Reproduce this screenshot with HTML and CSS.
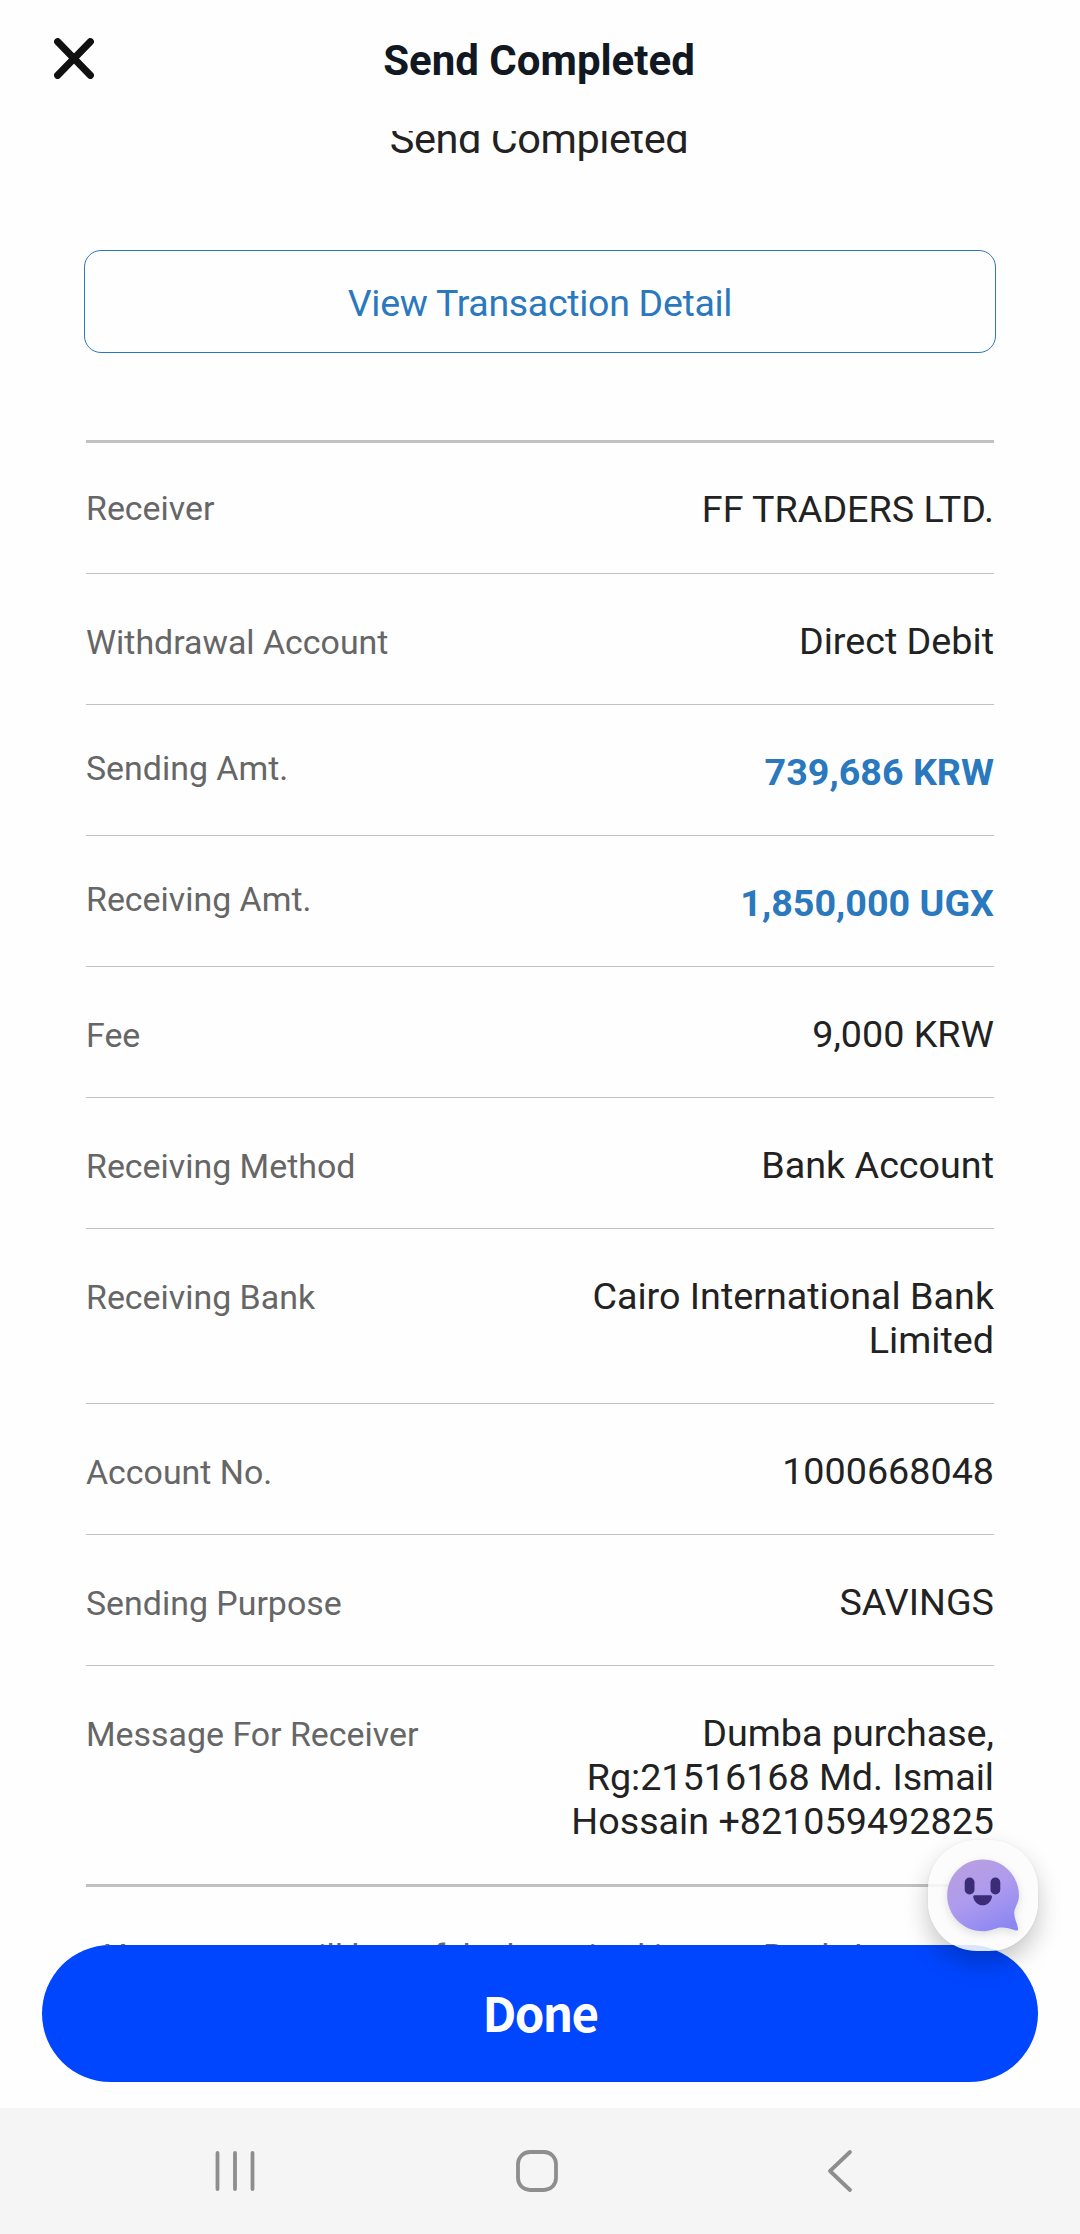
FILE: index.html
```html
<!DOCTYPE html>
<html lang="en">
<head>
    <meta charset="UTF-8">
    <meta name="viewport" content="width=device-width, initial-scale=1.0">
    <title>Send Completed</title>
    <link rel="stylesheet" href="styles.css">
</head>
<body>
    <header class="app-header">
        <button class="close-btn" aria-label="Close">
            <svg width="40" height="41" viewBox="0 0 40 41"><path d="M3.7 3.7 L36.3 37.3 M36.3 3.7 L3.7 37.3"/></svg>
        </button>
        <h1>Send Completed</h1>
    </header>

    <main class="content">
        <p class="result-title">Send Completed</p>
        <a href="#" class="detail-btn">View Transaction Detail</a>

        <dl class="receipt">
            <div class="row first"><dt>Receiver</dt><dd>FF TRADERS LTD.</dd></div>
            <div class="row"><dt>Withdrawal Account</dt><dd>Direct Debit</dd></div>
            <div class="row amount"><dt>Sending Amt.</dt><dd>739,686 KRW</dd></div>
            <div class="row amount"><dt>Receiving Amt.</dt><dd>1,850,000 UGX</dd></div>
            <div class="row"><dt>Fee</dt><dd>9,000 KRW</dd></div>
            <div class="row"><dt>Receiving Method</dt><dd>Bank Account</dd></div>
            <div class="row"><dt>Receiving Bank</dt><dd>Cairo International Bank<br>Limited</dd></div>
            <div class="row"><dt>Account No.</dt><dd>1000668048</dd></div>
            <div class="row"><dt>Sending Purpose</dt><dd>SAVINGS</dd></div>
            <div class="row"><dt>Message For Receiver</dt><dd>Dumba purchase,<br>Rg:21516168 Md. Ismail<br>Hossain +821059492825</dd></div>
        </dl>

        <p class="notice">Your money will be safely deposited in your Bank Account</p>
    </main>

    <div class="action-bar">
        <button class="done-btn">Done</button>
        <div class="chat-bubble">
            <svg width="73" height="74" viewBox="0 0 73 74">
                <defs>
                    <linearGradient id="face" x1="0.2" y1="0" x2="0.7" y2="1">
                        <stop offset="0" stop-color="#b99fe0"/>
                        <stop offset="0.5" stop-color="#ae9bee"/>
                        <stop offset="1" stop-color="#8d87f2"/>
                    </linearGradient>
                </defs>
                <path fill="url(#face)" d="M36 0.500 C56 0.500 72 16.500 72 36.500 C72 44 67.500 48 67.200 54 C67.200 59 70 64 71 69 C71.500 71.500 70 72 68 71.300 C63 69.500 58 68 53 68.500 C48 69.200 43 72.300 36 72.300 C16 72.300 0.200 56 0.200 36.500 C0.200 16.500 16 0.500 36 0.500 Z"/>
                <rect x="17.700" y="18.500" width="9.800" height="17" rx="4.900"/>
                <rect x="43.500" y="18.500" width="9.800" height="17" rx="4.900"/>
                <path d="M27.500 36.300 H43.700 Q45.300 36.300 45 38 C44 43 40.200 46.300 35.600 46.300 C31 46.300 27.200 43 26.200 38 Q26 36.300 27.500 36.300 Z"/>
            </svg>
        </div>
    </div>

    <nav class="system-nav">
        <svg width="40" height="44" viewBox="0 0 40 44"><path d="M2.500 4 V40 M20 4 V40 M37.500 4 V40"/></svg>
        <svg class="home" width="44" height="44" viewBox="0 0 44 44"><rect x="3" y="3" width="38" height="38" rx="12"/></svg>
        <svg width="28" height="44" viewBox="0 0 28 44"><path d="M24 3 L4 22 L24 41"/></svg>
    </nav>
</body>
</html>
```
FILE: styles.css
```css
:root {
    --link-color: #2a78bd;
    --text-color: #222;
    --label-color: #666;
    --line-color: #c1c1c1;
}

* {
    box-sizing: border-box;
}

body {
    margin: 0;
    height: 2234px;
    display: flex;
    flex-direction: column;
    overflow: hidden;
    background: #fefefe;
    color: var(--text-color);
    font-family: Roboto, "Liberation Sans", sans-serif;
}

/* header */
.app-header {
    height: 131px;
    flex: none;
    display: grid;
    grid-template-columns: 94px 1fr 94px;
    padding: 37px 0 0;
    align-items: start;
}
.close-btn {
    width: 94px;
    padding: 1px 0 0 54px;
    border: 0;
    background: none;
    line-height: 0;
}
.close-btn svg {
    fill: none;
    stroke: #111;
    stroke-width: 7.2;
    stroke-linecap: round;
}
.app-header h1 {
    margin: 0 2px 0 0;
    font-size: 42px;
    line-height: 48px;
    font-weight: 700;
    text-align: center;
    color: #121821;
}

/* scrolled content */
.content {
    height: 1814px;
    flex: none;
    overflow: hidden;
    padding: 0 84px;
}
.result-title {
    margin: -16px 2px 0 0;
    height: 135px;
    font-size: 41.5px;
    line-height: 48px;
    letter-spacing: -0.45px;
    text-align: center;
}
.detail-btn {
    display: block;
    height: 103px;
    border: 1px solid var(--link-color);
    border-radius: 17px;
    font-size: 37.5px;
    line-height: 104px;
    letter-spacing: -0.3px;
    text-align: center;
    text-decoration: none;
    color: var(--link-color);
}

.receipt {
    margin: 87px 2px 0;
    border-top: 3px solid var(--line-color);
    border-bottom: 3px solid var(--line-color);
}
.row {
    display: flex;
    justify-content: space-between;
    padding: 45px 0 41px;
    border-bottom: 1px solid var(--line-color);
}
.row.first {
    padding: 44px 0 42px;
}
.row:last-child {
    border-bottom: 0;
}
.row dt {
    padding-top: 4px;
    font-size: 33.9px;
    line-height: 40px;
    color: var(--label-color);
}
.row.first dt {
    padding-top: 2px;
}
.row.amount dt {
    margin-top: -1px;
    padding-top: 0;
}
.row dd {
    margin: 0;
    font-size: 37.7px;
    line-height: 44px;
    text-align: right;
    white-space: nowrap;
}
.row.amount dd {
    font-weight: 700;
    color: var(--link-color);
}

.notice {
    margin: 49px 0 0 21px;
    font-size: 34px;
    line-height: 40px;
    color: var(--label-color);
    white-space: nowrap;
}

/* bottom button */
.action-bar {
    position: relative;
    height: 163px;
    flex: none;
    padding: 0 42px;
}
.done-btn {
    width: 100%;
    height: 137px;
    padding: 0 0 3px;
    border: 0;
    border-radius: 69px;
    background: #0046ff;
    color: #fff;
    font: 700 47.5px/134px "Noto Sans CJK KR", sans-serif;
    letter-spacing: -1.7px;
}

/* floats over the list and the button */
.chat-bubble {
    position: absolute;
    top: -105px;
    right: 42px;
    width: 110px;
    height: 111px;
    padding: 19px 0 0 19px;
    border-radius: 49px;
    background: rgba(252, 252, 252, 0.87);
    box-shadow: 0 12px 24px rgba(0, 0, 0, 0.22), 0 0 3px rgba(0, 0, 0, 0.06);
    line-height: 0;
}
.chat-bubble svg {
    fill: #3b2c78;
    filter: drop-shadow(0 3px 4px rgba(0, 0, 0, 0.12));
}

/* system navigation */
.system-nav {
    height: 126px;
    flex: none;
    display: flex;
    justify-content: space-between;
    padding: 41px 226px 0 215px;
    background: #f5f5f5;
}
.system-nav svg {
    fill: none;
    stroke: #8e8e8e;
    stroke-width: 3.8;
    stroke-linecap: round;
    stroke-linejoin: round;
}
.system-nav .home {
    margin-right: 7px;
}
```
